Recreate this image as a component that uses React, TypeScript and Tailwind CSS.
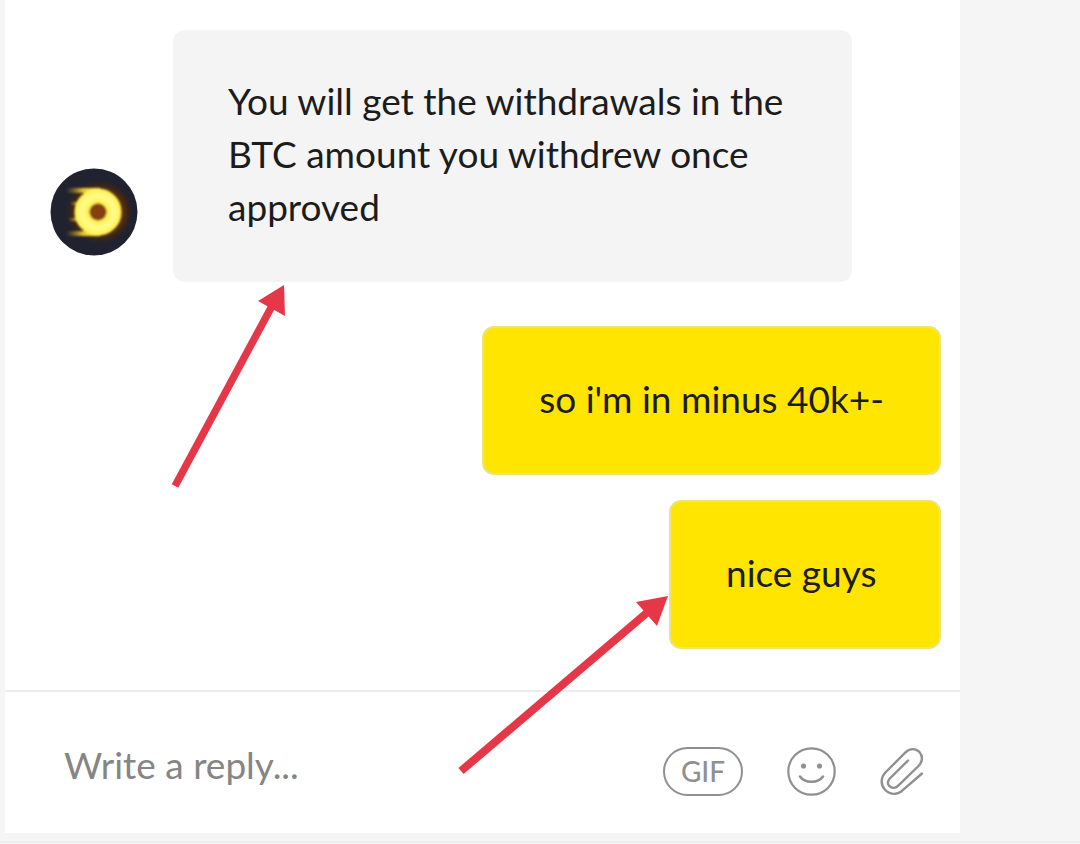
import React from 'react';

function Avatar() {
  return (
    <svg className="mb-[26px] size-[88px] shrink-0" viewBox="0 0 88 88" role="img" aria-label="Support">
      <defs>
        <radialGradient id="glow" cx="0.55" cy="0.5" r="0.5">
          <stop offset="0.55" stopColor="#7a3a06" />
          <stop offset="0.8" stopColor="#3d2516" stopOpacity="0.8" />
          <stop offset="1" stopColor="#20222f" stopOpacity="0" />
        </radialGradient>
        <linearGradient id="trail" x1="0" x2="1">
          <stop offset="0" stopColor="#c9961f" stopOpacity="0" />
          <stop offset="0.5" stopColor="#e6c22e" />
          <stop offset="1" stopColor="#fff45a" />
        </linearGradient>
        <filter id="soft" x="-20%" y="-20%" width="140%" height="140%">
          <feGaussianBlur stdDeviation="0.8" />
        </filter>
      </defs>
      <circle cx="44" cy="44" r="43.5" fill="#20222f" />
      <ellipse cx="46" cy="44" rx="36" ry="34" fill="url(#glow)" />
      <g filter="url(#soft)">
        <rect x="16" y="20" width="34" height="5" fill="url(#trail)" />
        <rect x="20" y="34" width="16" height="3" fill="url(#trail)" />
        <rect x="18" y="50" width="18" height="3" fill="url(#trail)" />
        <rect x="16" y="63" width="34" height="5" fill="url(#trail)" />
        <circle cx="48" cy="44" r="16" fill="none" stroke="#fff45a" strokeWidth="15" />
        <circle cx="48" cy="44" r="16" fill="none" stroke="#fffa85" strokeWidth="6" />
        <circle cx="48" cy="44" r="8.5" fill="#86400a" />
      </g>
    </svg>
  );
}

function SentMessage({ children }: { children: React.ReactNode }) {
  return (
    <div className="relative min-w-[272px] rounded-xl border-2 border-[#eee27a] bg-[#ffe500] px-[55px] pt-11 pb-12">
      {children}
    </div>
  );
}

function Composer() {
  return (
    <form className="flex items-start border-t-2 border-[#ececec] pt-[46px] pr-9 pb-[37px] pl-[59px]">
      <input
        type="text"
        aria-label="Write a reply"
        placeholder="Write a reply..."
        className="h-[53px] min-w-0 flex-1 bg-transparent outline-none placeholder:text-[#858585]"
      />
      <div className="flex gap-11 pt-[9px] text-[#909090]">
        <button
          type="button"
          className="flex h-[49px] w-20 items-center justify-center rounded-full border-2 border-[#909090] text-[28px] font-medium"
        >
          GIF
        </button>
        <button type="button" aria-label="Emoji">
          <svg className="size-[49px]" viewBox="0 0 49 49" fill="none" stroke="currentColor" strokeWidth="2.2">
            <circle cx="24.5" cy="24.5" r="23.2" />
            <circle cx="16.5" cy="19" r="2.6" fill="currentColor" stroke="none" />
            <circle cx="32.5" cy="19" r="2.6" fill="currentColor" stroke="none" />
            <path d="M13 29.5C18 36.5 31 36.5 36 29.5" strokeWidth="2.6" strokeLinecap="round" />
          </svg>
        </button>
        <button type="button" aria-label="Attach a file">
          <svg
            className="h-[49px] w-11"
            viewBox="0 0 44 49"
            fill="none"
            stroke="currentColor"
            strokeWidth="2.4"
            strokeLinecap="round"
          >
            <path d="M28 13.5L9.8 31.5C7.2 34.2 7.4 37.6 9.5 39.2C12 41.5 15.5 41.2 18 38.8L38.5 19C42.8 14.8 43 8.8 39.4 5C35.6 1 29.8 1.2 25.5 5.4L5.4 25.5C0.8 30 0.4 37.5 4.6 42.3C9.4 48 17.5 48.4 22.8 43.2L42 26.5" />
          </svg>
        </button>
      </div>
    </form>
  );
}

function App() {
  return (
    <div className="min-h-screen bg-[#f5f5f5] font-['Lato',sans-serif] text-[37px] leading-[53px] text-[#1c1c1c]">
      <main className="mr-[120px] ml-[5px] bg-white">
        <div className="flex flex-col pt-[30px] pr-[19px] pb-[41px] pl-[45px]">
          <div className="flex items-end gap-[35px]">
            <Avatar />
            <div className="relative max-w-[679px] rounded-xl bg-[#f4f4f4] px-[55px] pt-11 pb-[49px]">
              <p>You will get the withdrawals in the BTC amount you withdrew once approved</p>
              <svg className="absolute top-full -left-1 h-[208px] w-[120px]" viewBox="0 0 120 208" fill="#e63748">
                <path d="M6 204L103 24" stroke="#e63748" strokeWidth="7.5" />
                <path d="M115 3L89 19L116 34Z" />
              </svg>
            </div>
          </div>
          <div className="mt-11 flex flex-col items-end gap-[25px]">
            <SentMessage>
              <p>so i'm in minus 40k+-</p>
            </SentMessage>
            <SentMessage>
              <p>nice guys</p>
              <svg
                className="absolute top-[92px] right-full h-[182px] w-[216px]"
                viewBox="0 0 216 182"
                fill="#e63748"
              >
                <path d="M6 177L194 17" stroke="#e63748" strokeWidth="8" />
                <path d="M213 2L181 8L202 32Z" />
              </svg>
            </SentMessage>
          </div>
        </div>
        <Composer />
      </main>
      <div className="mt-2 border-t-2 border-[#efefef]" />
    </div>
  );
}

export default App;
